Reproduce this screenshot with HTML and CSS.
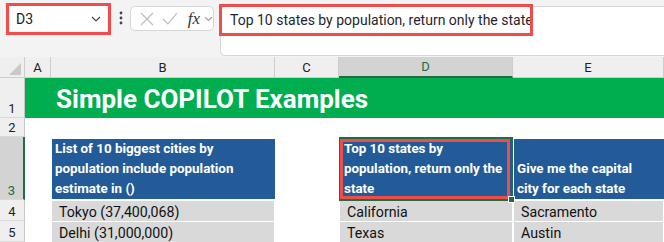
FILE: index.html
```html
<!DOCTYPE html>
<html lang="en">
<head>
    <meta charset="UTF-8">
    <title>Simple COPILOT Examples</title>
    <link rel="stylesheet" href="styles.css">
</head>
<body>
<div class="toolbar">
    <div class="namebox-mark">
        <div class="namebox">
            <span>D3</span>
            <svg width="10" height="6" viewBox="0 0 10 6"><path d="M1 1 L5 5 L9 1" fill="none" stroke="#444" stroke-width="1.2"/></svg>
        </div>
    </div>
    <svg class="dots" width="4" height="14" viewBox="0 0 4 14"><circle cx="2" cy="2" r="1.4" fill="#444"/><circle cx="2" cy="7" r="1.4" fill="#444"/><circle cx="2" cy="12" r="1.4" fill="#444"/></svg>
    <div class="fxbox">
        <svg width="14" height="14" viewBox="0 0 14 14"><path d="M1 1 L13 13 M13 1 L1 13" stroke="#bdbdbd" stroke-width="1.2"/></svg>
        <svg width="16" height="14" viewBox="0 0 16 14"><path d="M1 7 L6 12 L15 1" fill="none" stroke="#bdbdbd" stroke-width="1.2"/></svg>
        <span class="fx">fx</span>
        <svg width="9" height="6" viewBox="0 0 9 6"><path d="M1 1 L4.5 4.5 L8 1" fill="none" stroke="#9a9a9a" stroke-width="1.1"/></svg>
    </div>
    <div class="formula">
        <div class="formula-text">Top 10 states by population, return only the state</div>
        <div class="mark formula-mark"></div>
    </div>
</div>

<div class="sheet">
    <div class="ch corner"><span class="tri"></span></div>
    <div class="ch">A</div>
    <div class="ch">B</div>
    <div class="ch">C</div>
    <div class="ch sel">D</div>
    <div class="ch">E</div>

    <div class="rh">1</div>
    <div class="title">Simple COPILOT Examples</div>

    <div class="rh">2</div>
    <div></div><div></div><div></div><div></div><div></div>

    <div class="rh sel">3</div>
    <div></div>
    <div class="cell head">List of 10 biggest cities by<br>population include population<br>estimate in ()</div>
    <div></div>
    <div class="active">
        <div class="cell head">Top 10 states by<br>population, return only the<br>state</div>
        <div class="mark"></div>
        <span class="handle"></span>
    </div>
    <div class="cell head">Give me the capital<br>city for each state</div>

    <div class="rh">4</div>
    <div></div>
    <div class="cell data">Tokyo (37,400,068)</div>
    <div></div>
    <div class="cell data">California</div>
    <div class="cell data">Sacramento</div>

    <div class="rh">5</div>
    <div></div>
    <div class="cell data">Delhi (31,000,000)</div>
    <div></div>
    <div class="cell data">Texas</div>
    <div class="cell data">Austin</div>
</div>
</body>
</html>
```

FILE: styles.css
```css
body {
    margin: 0;
    width: 664px;
    height: 242px;
    overflow: hidden;
    font-family: Roboto, "Noto Sans", sans-serif;
    background-color: #fff;
}

.toolbar {
    display: flex;
    align-items: flex-start;
    height: 57px;
    padding: 3px 0 0 6px;
    box-sizing: border-box;
    background-color: #f3f3f3;
}

.namebox-mark {
    width: 105px;
    height: 32px;
    border: 3px solid #f14c4c;
    box-sizing: border-box;
    padding: 0 1px 1px 1px;
}

.namebox {
    display: flex;
    align-items: center;
    justify-content: space-between;
    height: 100%;
    padding: 0 6px 0 6px;
    box-sizing: border-box;
    background-color: #fff;
    border-radius: 3px;
    font-size: 14px;
    color: #222;
}

.dots {
    margin: 8px 0 0 8px;
}

.fxbox {
    display: flex;
    align-items: center;
    gap: 8px;
    width: 84px;
    height: 25px;
    margin: 3px 0 0 7px;
    padding-left: 9px;
    box-sizing: border-box;
    background-color: #fff;
    border: 1px solid #d6d6d6;
    border-radius: 5px;
}

.fx {
    font-family: "Liberation Serif", serif;
    font-style: italic;
    font-size: 17px;
    color: #333;
    margin-left: 2px;
    margin-right: -4px;
}

.formula {
    position: relative;
    flex: 1;
    height: 48px;
    margin: 3px 0 0 6px;
    background-color: #fff;
    border: 1px solid #d6d6d6;
    border-right: none;
    border-radius: 5px 0 0 5px;
}

.formula-text {
    padding: 5px 0 0 9px;
    font-size: 14px;
    color: #1f1f2e;
}

.mark {
    position: absolute;
    border: 3px solid #f14c4c;
    box-sizing: border-box;
}

.formula-mark {
    left: -2px;
    top: -3px;
    width: 314px;
    height: 32px;
}

.sheet {
    display: grid;
    grid-template-columns: 25px 26px 224px 64px 174px 151px;
    grid-template-rows: 21px 40px 19px 63px 21px 21px;
}

.ch {
    display: flex;
    align-items: center;
    justify-content: center;
    background-color: #efefef;
    border-right: 1px solid #cdcdcd;
    border-bottom: 1px solid #cdcdcd;
    font-size: 13px;
    color: #222;
}

.ch.sel {
    background-color: #d3d3d3;
    border-bottom: 2px solid #1e6e42;
    color: #1e6e42;
}

.corner {
    position: relative;
}

.tri {
    position: absolute;
    right: 3px;
    bottom: 2px;
    width: 0;
    height: 0;
    border-left: 12px solid transparent;
    border-bottom: 12px solid #c9c9c9;
}

.rh {
    display: flex;
    align-items: flex-end;
    justify-content: center;
    padding-bottom: 1px;
    background-color: #efefef;
    border-right: 1px solid #c6c6c6;
    border-bottom: 1px solid #d9d9d9;
    font-size: 13px;
    color: #222;
}

.rh.sel {
    background-color: #d3d3d3;
    border-right: 2px solid #1e6e42;
    color: #1e6e42;
}

.title {
    grid-column: 2 / -1;
    display: flex;
    align-items: center;
    padding: 2px 0 0 31px;
    background-color: #00ae4f;
    color: #fff;
    font-size: 26px;
    font-weight: bold;
}

.cell {
    display: flex;
    align-items: flex-end;
    overflow: hidden;
    white-space: nowrap;
}

.head {
    margin: 2px 0 1px 1px;
    padding: 0 0 0 3px;
    background-color: #225b98;
    color: #fff;
    font-size: 13.4px;
    font-weight: bold;
    line-height: 20px;
}

.data {
    margin: 1px 1px 0 1px;
    padding: 0 0 1px 7px;
    background-color: #d9d9d9;
    color: #111;
    font-size: 14.2px;
}

.active {
    position: relative;
    display: flex;
    border: 2px solid #1e6e42;
    margin-bottom: -1px;
}

.active .head {
    flex: 1;
    margin: 0;
}

.active .mark {
    left: -1px;
    top: 0;
    right: 1px;
    bottom: 0;
}

.handle {
    position: absolute;
    right: -4px;
    bottom: -4px;
    width: 5px;
    height: 5px;
    background-color: #1e6e42;
    border: 1px solid #fff;
}
```
